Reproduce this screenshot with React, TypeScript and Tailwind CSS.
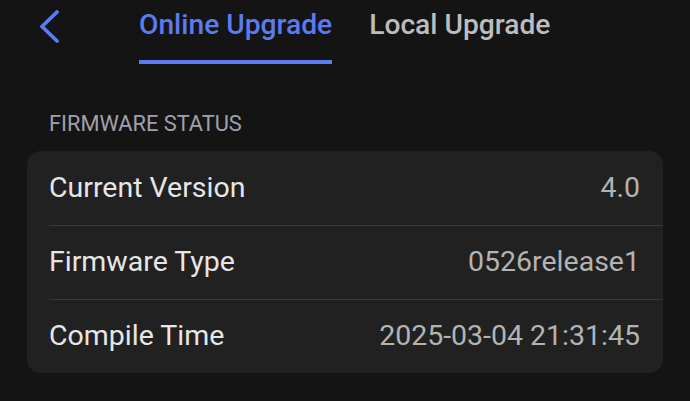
const rows = [
  { label: 'Current Version', value: '4.0' },
  { label: 'Firmware Type', value: '0526release1' },
  { label: 'Compile Time', value: '2025-03-04 21:31:45' },
];

export default function App() {
  return (
    <div className="h-[401px] w-[690px] overflow-hidden bg-[#141414] font-['Roboto',sans-serif]">
      <div className="flex h-[64px] items-start">
        <button type="button" className="ml-[39px] mt-[10px] flex h-[34px] w-[22px] items-center justify-center text-[#5b7bf0]" aria-label="Back">
          <svg width="22" height="34" viewBox="0 0 22 34" fill="none">
            <path d="M18 2 L3 16.5 L18 31" stroke="currentColor" strokeWidth="3.8" strokeLinecap="round" strokeLinejoin="round" />
          </svg>
        </button>
        <div className="ml-[78px] flex gap-[37px]">
          <div className="flex flex-col items-stretch">
            <span className="pt-[9px] text-[28.2px] font-medium leading-[32px] text-[#5b7bf0]">Online Upgrade</span>
            <span className="mt-[19px] h-[4px] bg-[#5b7bf0]" />
          </div>
          <span className="pt-[9px] text-[28.2px] font-medium leading-[32px] text-[#bdbdbd]">Local Upgrade</span>
        </div>
      </div>

      <div className="mt-[48px] pl-[49px] text-[21.8px] leading-[24px] text-[#a0a0ac]">FIRMWARE STATUS</div>

      <div className="mx-[27px] mt-[15px] rounded-[14px] bg-[#212121]">
        {rows.map((r, i) => (
          <div key={r.label} className={`ml-[22px] flex h-[74px] items-center justify-between pr-[23px] ${i > 0 ? 'border-t border-[#3a3a3a]' : ''}`}>
            <span className="text-[28.5px] text-[#e6e6e6]">{r.label}</span>
            <span className="text-[28.5px] text-[#b3b3b3]">{r.value}</span>
          </div>
        ))}
      </div>
    </div>
  );
}
